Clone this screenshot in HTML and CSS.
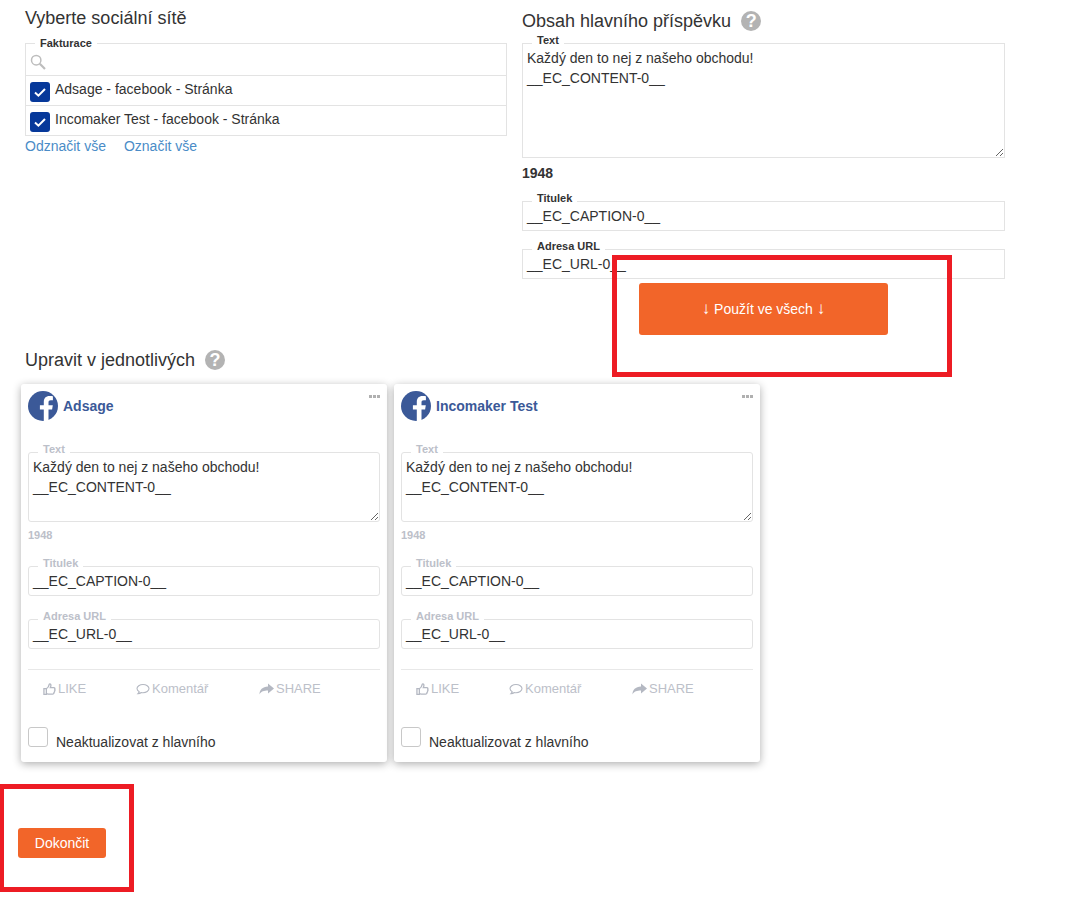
FILE: index.html
```html
<!DOCTYPE html>
<html lang="cs">
<head>
<meta charset="utf-8">
<title>Příspěvek</title>
<link rel="stylesheet" href="styles.css">
</head>
<body>
<div class="page">
  <div class="top">
    <section class="col-left">
      <h2 class="title title-left">Vyberte sociální sítě</h2>
      <div class="picker">
        <span class="label">Fakturace</span>
        <div class="search">
          <svg class="search-icon" viewBox="0 0 16 16" width="16" height="16"><circle cx="6.2" cy="6.2" r="4.7" fill="none" stroke="#bdbdbd" stroke-width="1.5"/><path d="M9.8 9.8L15 15" stroke="#bdbdbd" stroke-width="2.2" fill="none"/></svg>
        </div>
        <div class="pick-row">
          <span class="check"><svg viewBox="0 0 20 20" width="20" height="20"><path d="M5 10.5l3.4 3.2L15 7" fill="none" stroke="#fff" stroke-width="2"/></svg></span>
          <span>Adsage - facebook - Stránka</span>
        </div>
        <div class="pick-row">
          <span class="check"><svg viewBox="0 0 20 20" width="20" height="20"><path d="M5 10.5l3.4 3.2L15 7" fill="none" stroke="#fff" stroke-width="2"/></svg></span>
          <span>Incomaker Test - facebook - Stránka</span>
        </div>
      </div>
      <div class="links"><a href="#">Odznačit vše</a><a href="#">Označit vše</a></div>
    </section>
    <section class="col-right">
      <h2 class="title title-right">Obsah hlavního příspěvku <span class="help">?</span></h2>
      <div class="field">
        <span class="label">Text</span>
        <textarea class="area area-main" spellcheck="false">Každý den to nej z našeho obchodu!
__EC_CONTENT-0__</textarea>
      </div>
      <div class="count">1948</div>
      <div class="field field-gap">
        <span class="label">Titulek</span>
        <div class="input">__EC_CAPTION-0__</div>
      </div>
      <div class="field field-gap">
        <span class="label">Adresa URL</span>
        <div class="input">__EC_URL-0__</div>
      </div>
      <button class="btn btn-all"><span class="arrow">↓</span> Použít ve všech <span class="arrow">↓</span></button>
    </section>
  </div>

  <h2 class="title title-each">Upravit v jednotlivých <span class="help">?</span></h2>

  <div class="cards">
    <article class="card">
      <span class="dots"><i></i><i></i><i></i></span>
      <header class="card-head">
        <svg class="fb" viewBox="0 0 30 30" width="30" height="30"><circle cx="15" cy="15" r="15" fill="#3b5998"/><path d="M20.5 30V18.6h3.600l.7-4.400h-4.300v-2.600c0-1.500.6-2.300 2.300-2.300h2.100V5.300c-.8-.2-2-.3-3.400-.3-3.700 0-5.700 2.200-5.700 5.900v3.300h-3.900v4.400h3.900V30z" fill="#fff"/></svg>
        <span class="page-name">Adsage</span>
      </header>
      <div class="field field-card">
        <span class="label">Text</span>
        <textarea class="area area-card" spellcheck="false">Každý den to nej z našeho obchodu!
__EC_CONTENT-0__</textarea>
      </div>
      <div class="count count-card">1948</div>
      <div class="field field-card field-t">
        <span class="label">Titulek</span>
        <div class="input">__EC_CAPTION-0__</div>
      </div>
      <div class="field field-card field-u">
        <span class="label">Adresa URL</span>
        <div class="input">__EC_URL-0__</div>
      </div>
      <div class="actions">
        <span class="action a-like"><svg viewBox="0 0 14 14" width="13" height="14"><path d="M1 6.500h2.600v6.200H1zM3.600 6.800c1.600-1 2.700-2.600 3-4.600.1-.9 1.700-.9 1.900.4.1 1-.2 2-.6 2.900h3.700c1.100 0 1.400 1 1 1.700.5.700.3 1.500-.2 1.900.2.800-.1 1.400-.6 1.700.1 1-.5 1.800-1.500 1.800H6.500c-1.100 0-2-.5-2.900-.7" fill="none" stroke="#b4b8c2" stroke-width="1.400"/></svg>LIKE</span>
        <span class="action a-comment"><svg viewBox="0 0 14 14" width="14" height="14"><path d="M7 2.500c3.300 0 6 1.800 6 4.100s-2.700 4.100-6 4.100c-.6 0-1.200-.1-1.700-.2-.9.700-2 1.100-3.300 1.200.6-.6 1.100-1.300 1.200-2C1.900 8.900 1 7.800 1 6.600c0-2.300 2.700-4.100 6-4.100z" fill="none" stroke="#b4b8c2" stroke-width="1.100"/></svg>Komentář</span>
        <span class="action"><svg viewBox="0 0 15 14" width="15" height="14"><path d="M9 1.500l6 5-6 5V8.600C5 8.600 2.200 9.300.5 12.500.5 7.500 3.500 4.700 9 4.400z" fill="#b4b8c2"/></svg>SHARE</span>
      </div>
      <label class="keep"><span class="box"></span><span class="keep-text">Neaktualizovat z hlavního</span></label>
    </article>

    <article class="card">
      <span class="dots"><i></i><i></i><i></i></span>
      <header class="card-head">
        <svg class="fb" viewBox="0 0 30 30" width="30" height="30"><circle cx="15" cy="15" r="15" fill="#3b5998"/><path d="M20.5 30V18.6h3.600l.7-4.400h-4.300v-2.600c0-1.500.6-2.300 2.300-2.300h2.100V5.300c-.8-.2-2-.3-3.400-.3-3.700 0-5.700 2.200-5.700 5.900v3.300h-3.900v4.400h3.900V30z" fill="#fff"/></svg>
        <span class="page-name">Incomaker Test</span>
      </header>
      <div class="field field-card">
        <span class="label">Text</span>
        <textarea class="area area-card" spellcheck="false">Každý den to nej z našeho obchodu!
__EC_CONTENT-0__</textarea>
      </div>
      <div class="count count-card">1948</div>
      <div class="field field-card field-t">
        <span class="label">Titulek</span>
        <div class="input">__EC_CAPTION-0__</div>
      </div>
      <div class="field field-card field-u">
        <span class="label">Adresa URL</span>
        <div class="input">__EC_URL-0__</div>
      </div>
      <div class="actions">
        <span class="action a-like"><svg viewBox="0 0 14 14" width="13" height="14"><path d="M1 6.500h2.600v6.200H1zM3.600 6.800c1.600-1 2.700-2.600 3-4.600.1-.9 1.700-.9 1.900.4.1 1-.2 2-.6 2.900h3.700c1.100 0 1.400 1 1 1.700.5.700.3 1.500-.2 1.900.2.800-.1 1.400-.6 1.700.1 1-.5 1.800-1.500 1.800H6.500c-1.100 0-2-.5-2.900-.7" fill="none" stroke="#b4b8c2" stroke-width="1.400"/></svg>LIKE</span>
        <span class="action a-comment"><svg viewBox="0 0 14 14" width="14" height="14"><path d="M7 2.500c3.300 0 6 1.800 6 4.100s-2.700 4.100-6 4.100c-.6 0-1.200-.1-1.700-.2-.9.700-2 1.100-3.300 1.200.6-.6 1.100-1.300 1.200-2C1.900 8.900 1 7.800 1 6.600c0-2.300 2.700-4.100 6-4.100z" fill="none" stroke="#b4b8c2" stroke-width="1.100"/></svg>Komentář</span>
        <span class="action"><svg viewBox="0 0 15 14" width="15" height="14"><path d="M9 1.500l6 5-6 5V8.600C5 8.600 2.200 9.300.5 12.500.5 7.500 3.500 4.700 9 4.400z" fill="#b4b8c2"/></svg>SHARE</span>
      </div>
      <label class="keep"><span class="box"></span><span class="keep-text">Neaktualizovat z hlavního</span></label>
    </article>
  </div>

  <button class="btn btn-finish">Dokončit</button>

  <div class="mark mark-all"></div>
  <div class="mark mark-finish"></div>
</div>
</body>
</html>
```
FILE: styles.css
```css
* { box-sizing: border-box; }
html, body { margin: 0; background: #fff; }
body {
  font-family: "Liberation Sans", Arial, sans-serif;
  font-size: 14px;
  line-height: 20px;
  color: #333;
}
.page { position: relative; min-height: 898px; overflow: hidden; }

.top { display: flex; gap: 15px; padding-left: 25px; }
.col-left { width: 482px; }
.col-right { width: 483px; }

.title { margin: 0; font-size: 18px; font-weight: 400; line-height: 20px; color: #333; display: flex; align-items: center; gap: 10px; }
.title-left { padding-top: 8px; margin-bottom: 15px; }
.title-right { padding-top: 11px; margin-bottom: 12px; }
.title-each { margin: 15px 0 14px 25px; }
.help {
  width: 20px; height: 20px; border-radius: 50%;
  background: #b3b3b3; color: #fff;
  font-size: 18px; font-weight: 700; line-height: 20px; text-align: center;
  flex: none;
}

.label {
  position: absolute; left: 10px; top: -10px;
  padding: 0 5px; background: #fff;
  font-size: 11px; font-weight: 700; line-height: 14px; color: #333;
}

.picker { position: relative; border: 1px solid #e3e3e3; }
.picker .label { top: -8px; left: 9px; }
.search { height: 32px; padding: 10px 0 0 4px; border-bottom: 1px solid #e3e3e3; }
.search-icon { display: block; }
.pick-row { display: flex; height: 30px; padding-left: 4px; gap: 5px; border-bottom: 1px solid #e3e3e3; }
.pick-row:last-child { height: 29px; border-bottom: 0; }
.pick-row span:last-child { padding-top: 3px; }
.check { width: 20px; height: 20px; margin-top: 6px; border-radius: 3px; background: #06389a; flex: none; }
.check svg { display: block; }
.links { display: flex; gap: 18px; margin-top: 0; }
.links a { color: #4a8cc7; text-decoration: none; }

.field { position: relative; }
.field-gap { margin-top: 18px; }
.area {
  display: block; width: 100%; margin: 0;
  border: 1px solid #e3e3e3; border-radius: 0; outline: 0;
  padding: 4px 4px; background: #fff;
  font: 14px/20px "Liberation Sans", Arial, sans-serif; color: #333;
  resize: vertical; overflow: hidden;
}
.area-main { height: 115px; }
.area-card { height: 70px; }
.input { height: 30px; border: 1px solid #e3e3e3; padding: 4px 4px; color: #333; }
.count { margin-top: 5px; margin-bottom: 18px; font-weight: 700; }

.btn {
  display: block; border: 0; border-radius: 3px; padding: 0;
  background: #f26529; color: #fff;
  font: 14px/20px "Liberation Sans", Arial, sans-serif;
}
.arrow { font-size: 17px; line-height: 14px; }
.btn-all { width: 249px; height: 52px; margin: 4px 0 0 117px; }
.btn-finish { width: 88px; height: 30px; margin: 66px 0 0 18px; }

.cards { display: flex; gap: 7px; margin-left: 21px; }
.card {
  position: relative; width: 366px; padding: 7px 7px 15px;
  border-radius: 3px; background: #fff;
  box-shadow: 0 2px 8px rgba(0, 0, 0, .32);
}
.dots { position: absolute; right: 7px; top: 11px; display: flex; gap: 1px; }
.dots i { width: 3px; height: 3px; background: #b0b0b0; }
.card-head { display: flex; align-items: center; gap: 5px; height: 30px; margin-bottom: 31px; }
.fb { display: block; flex: none; }
.page-name { font-size: 14px; font-weight: 700; color: #3b5998; }

.field-card .label { color: #bcc0c9; top: -10px; }
.field-card .area, .field-card .input { border-color: #e3e3e3; border-radius: 3px; }
.count-card { margin: 6px 0 0; font-size: 11px; line-height: 14px; color: #bcc0c9; }
.field-t { margin-top: 24px; }
.field-u { margin-top: 23px; }

.actions {
  display: flex; margin-top: 20px; padding: 9px 0 0 15px;
  border-top: 1px solid #e8e8e8;
  color: #bcc0c9; font-size: 13px; line-height: 19px;
}
.action { display: flex; align-items: center; gap: 2px; }
.a-like { width: 93px; }
.a-comment { width: 123px; }

.keep { display: flex; margin-top: 29px; gap: 8px; }
.box { width: 20px; height: 20px; border: 1px solid #c8c8c8; border-radius: 3px; flex: none; }
.keep-text { padding-top: 5px; line-height: 20px; margin-bottom: -5px; }

.mark { position: absolute; border: 5px solid #ed1c24; }
.mark-all { left: 612px; top: 255px; width: 340px; height: 122px; }
.mark-finish { left: 0; top: 784px; width: 134px; height: 108px; border-left-width: 4px; }
```
